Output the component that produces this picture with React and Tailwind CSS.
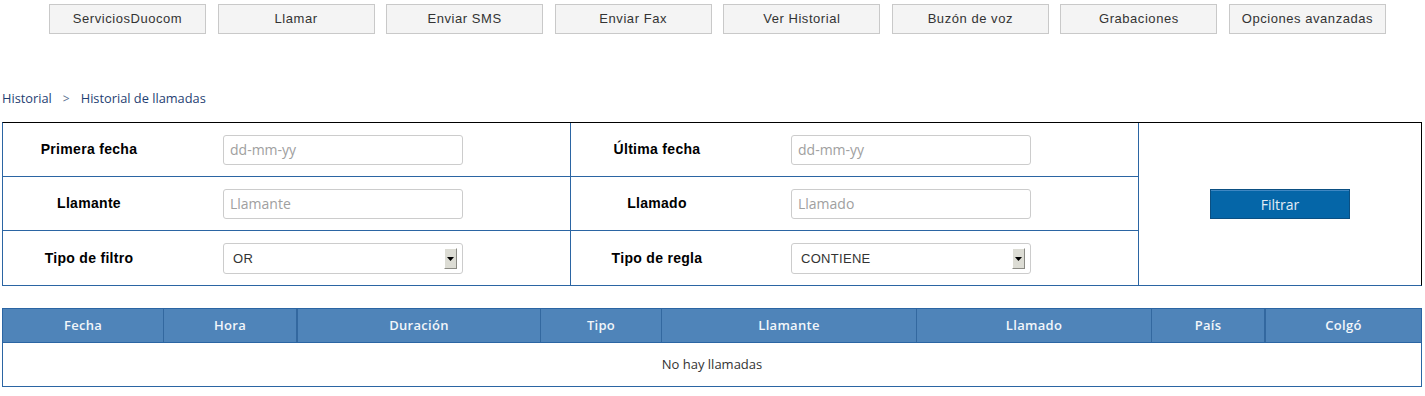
import React from "react";

const menu = [
  "ServiciosDuocom",
  "Llamar",
  "Enviar SMS",
  "Enviar Fax",
  "Ver Historial",
  "Buzón de voz",
  "Grabaciones",
  "Opciones avanzadas",
];

const columns = [
  { label: "Fecha", w: "w-[161px]", b: "border-r" },
  { label: "Hora", w: "w-[134px]", b: "border-r-2" },
  { label: "Duración", w: "w-[243px]", b: "border-r" },
  { label: "Tipo", w: "w-[121px]", b: "border-r" },
  { label: "Llamante", w: "w-[255px]", b: "border-r" },
  { label: "Llamado", w: "w-[235px]", b: "border-r" },
  { label: "País", w: "w-[114px]", b: "border-r-2" },
  { label: "Colgó", w: "w-[155px]", b: "" },
];

function TextField({ placeholder }) {
  return (
    <input
      type="text"
      placeholder={placeholder}
      className="ml-[48px] w-[240px] h-[30px] px-[6px] border border-[#cccccc] rounded-[3px] text-[14px] text-[#555] placeholder:text-[#a0a0a0] outline-none font-['Open_Sans',sans-serif]"
    />
  );
}

function SelectField({ value }) {
  return (
    <div className="ml-[48px] w-[240px] h-[31px] mt-[1px] border border-[#cccccc] rounded-[3px] flex items-center justify-between pl-[9px] pr-[5px] bg-white">
      <span className="text-[13px] text-[#333] tracking-[0.3px] pt-[1px] font-['Liberation_Sans',Arial,sans-serif]">{value}</span>
      <span className="w-[13px] h-[21px] bg-[#dcdcd4] border-t border-l border-t-white border-l-white border-r border-b border-r-[#8a8a84] border-b-[#8a8a84] flex items-center justify-center">
        <svg width="7" height="4" viewBox="0 0 7 4">
          <polygon points="0,0 7,0 3.5,4" fill="#000" />
        </svg>
      </span>
    </div>
  );
}

function Cell({ label, children, border }) {
  return (
    <div className={`w-[568px] flex items-center border-[#2b65a3] ${border}`}>
      <div className="w-[172px] text-center text-[14px] font-bold text-black tracking-[0.3px] font-['Liberation_Sans',Arial,sans-serif]">
        {label}
      </div>
      {children}
    </div>
  );
}

export default function App() {
  return (
    <div className="min-h-screen bg-white font-['Open_Sans',sans-serif]">
      {/* Top menu */}
      <div className="flex gap-[11.57px] pl-[49px] pt-[4px]">
        {menu.map((m) => (
          <button
            key={m}
            className="w-[157px] h-[30px] bg-[#f4f4f4] border border-[#c9c9c9] text-[13px] text-[#333] tracking-[0.55px] font-['Liberation_Sans',Arial,sans-serif]"
          >
            {m}
          </button>
        ))}
      </div>

      {/* Breadcrumb */}
      <div className="mt-[56px] pl-[2px] flex items-center text-[12.8px] text-[#1f3f73] h-[18px]">
        <span>Historial</span>
        <span className="mx-[11px] text-[#5a6f90] text-[12px]">&gt;</span>
        <span>Historial de llamadas</span>
      </div>

      {/* Filters */}
      <div className="mt-[14px] ml-[2px] w-[1420px] flex border-t border-r border-t-black border-r-black border-l border-b border-l-[#2b65a3] border-b-[#2b65a3]">
        <div className="flex flex-col w-[1136px]">
          <div className="flex h-[54px] border-b border-[#2b65a3]">
            <Cell label="Primera fecha" border="border-r">
              <TextField placeholder="dd-mm-yy" />
            </Cell>
            <Cell label="Última fecha" border="border-r">
              <TextField placeholder="dd-mm-yy" />
            </Cell>
          </div>
          <div className="flex h-[54px] border-b border-[#2b65a3]">
            <Cell label="Llamante" border="border-r">
              <TextField placeholder="Llamante" />
            </Cell>
            <Cell label="Llamado" border="border-r">
              <TextField placeholder="Llamado" />
            </Cell>
          </div>
          <div className="flex h-[54px]">
            <Cell label="Tipo de filtro" border="border-r">
              <SelectField value="OR" />
            </Cell>
            <Cell label="Tipo de regla" border="border-r">
              <SelectField value="CONTIENE" />
            </Cell>
          </div>
        </div>
        <div className="flex-1 flex items-center justify-center">
          <button className="w-[140px] h-[30px] bg-[#0566a8] border border-[#0b4f82] shadow-[inset_0_1px_0_#3f87c2] text-[14px] text-[#e4edf5]">
            Filtrar
          </button>
        </div>
      </div>

      {/* Results */}
      <div className="mt-[22px] ml-[2px] w-[1420px] border border-[#2b65a3]">
        <div className="flex h-[34px] bg-[#4f84b9] border-b border-[#2b65a3]">
          {columns.map((c) => (
            <div
              key={c.label}
              className={`${c.w} ${c.b} border-[#33689f] flex items-center justify-center text-[13px] font-semibold text-[#f2f6fa] tracking-[0.3px]`}
            >
              {c.label}
            </div>
          ))}
        </div>
        <div className="h-[43px] flex items-center justify-center text-[13px] text-[#333]">
          No hay llamadas
        </div>
      </div>
    </div>
  );
}
